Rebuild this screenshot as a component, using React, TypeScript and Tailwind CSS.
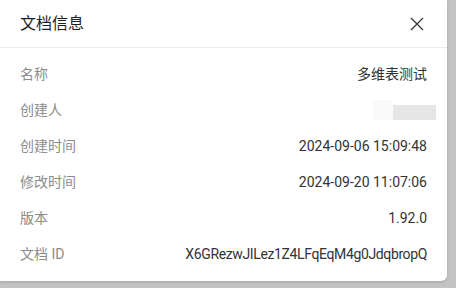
const rows: { label: string; value: string | null; tight?: boolean }[] = [
  { label: "名称", value: "多维表测试" },
  { label: "创建人", value: null },
  { label: "创建时间", value: "2024-09-06 15:09:48" },
  { label: "修改时间", value: "2024-09-20 11:07:06" },
  { label: "版本", value: "1.92.0" },
  { label: "文档 ID", value: "X6GRezwJILez1Z4LFqEqM4g0JdqbropQ", tight: true },
]

export default function App() {
  return (
    <div
      className="w-[456px] h-[288px] bg-[#c3c3c3] overflow-hidden"
      style={{ fontFamily: 'Roboto, "Noto Sans CJK SC", sans-serif' }}
    >
      <div className="w-[447px] bg-white rounded-br-[6px] shadow-[0_1px_3px_rgba(0,0,0,0.15)]">
        <div className="h-[48px] flex items-center justify-between pl-5 pr-[23px] border-b border-[#ebebeb]">
          <span className="text-[16px] text-[#1f1f1f]">文档信息</span>
          <svg width="14" height="14" viewBox="0 0 14 14" fill="none" stroke="#333" strokeWidth="1.2">
            <path d="M1 1L13 13M13 1L1 13" />
          </svg>
        </div>
        <div className="px-5 pt-2 pb-[9px]">
          {rows.map((r) => (
            <div key={r.label} className="h-[36px] flex items-center justify-between text-[14px]">
              <span className="text-[#8c8c8c]">{r.label}</span>
              {r.value ? (
                <span className={r.tight ? "text-[#333333] tracking-[-0.37px]" : "text-[#333333]"}>{r.value}</span>
              ) : (
                <div className="flex items-center">
                  <div className="w-[20px] h-[20px] bg-[#fafafa]" />
                  <div className="w-[43px] h-[15px] mt-[4px] -mr-[9px] bg-[#e6e6e6]" />
                </div>
              )}
            </div>
          ))}
        </div>
      </div>
    </div>
  )
}
